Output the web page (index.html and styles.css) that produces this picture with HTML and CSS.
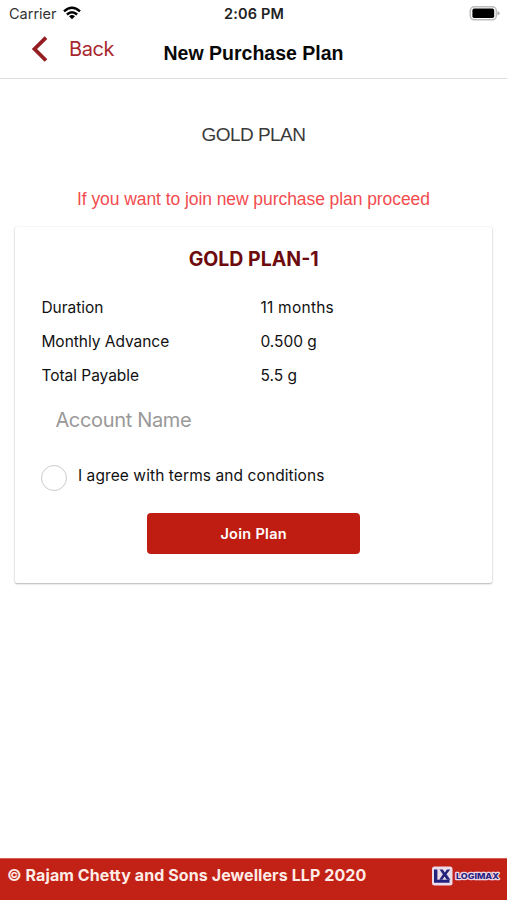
FILE: index.html
```html
<!DOCTYPE html>
<html lang="en">
<head>
<meta charset="utf-8">
<title>New Purchase Plan</title>
<link rel="stylesheet" href="styles.css">
</head>
<body>
<div class="app">
  <div class="status">
    <div class="carrier"><span>Carrier</span>
      <svg class="wifi" width="18" height="14" viewBox="0 0 18 14"><g fill="none" stroke="#000" stroke-width="2.5"><path d="M1 5.4Q9-1.8 17 5.4"/><path d="M3.9 8.5Q9 3.9 14.1 8.5"/></g><path d="M6 10.2Q9 7.7 12 10.2L9 13.3Z"/></svg>
    </div>
    <span class="time">2:06 PM</span>
    <svg class="battery" width="31" height="15" viewBox="0 0 31 15"><rect x="1.3" y=".8" width="26" height="13" rx="4" fill="#fff" stroke="#bcbcbc" stroke-width="1.5"/><rect x="3.4" y="2.6" width="21.8" height="9.4" rx="1.8"/><path d="M28.5 5Q30.7 6 30.7 7.3T28.5 9.6Z" fill="#aaa"/></svg>
  </div>
  <header class="nav">
    <a class="back"><svg width="17" height="27" viewBox="0 0 17 27"><path d="M15 1.7L3.5 13 15 24.5" fill="none" stroke="#941e22" stroke-width="3.8"/></svg><span>Back</span></a>
    <h1>New Purchase Plan</h1>
  </header>
  <main>
    <h2>GOLD PLAN</h2>
    <p class="notice">If you want to join new purchase plan proceed</p>
    <section class="card">
      <h3>GOLD PLAN-1</h3>
      <dl>
        <dt>Duration</dt><dd class="months">11 months</dd>
        <dt>Monthly Advance</dt><dd>0.500 g</dd>
        <dt>Total Payable</dt><dd>5.5 g</dd>
      </dl>
      <input class="account" placeholder="Account Name" aria-label="Account Name">
      <label class="terms"><span class="circle"></span><span class="agree">I agree with terms and conditions</span></label>
      <button>Join Plan</button>
    </section>
  </main>
  <footer>
    <span class="copyright">© Rajam Chetty and Sons Jewellers LLP 2020</span>
    <svg class="logo" width="70" height="22" viewBox="0 0 70 22"><rect x="1" y="1.5" width="20.5" height="19" rx="2.5" fill="#eadce8"/><path d="M3 4.5H6.4V14.8H18.5V17.8H3Z" fill="#23237d"/><path d="M8.5 4.5H11.8L13.8 7.5 16 4.5H19.2L15.5 9.3 19.4 14.8H15.8L13.5 11.5 11.3 14.8H8.2L11.9 9.3Z" fill="#23237d"/><text x="25" y="14.3" textLength="43" lengthAdjust="spacingAndGlyphs" font-family="Inter, sans-serif" font-size="7.8" font-weight="800" fill="#282381" stroke="#eed7e3" stroke-width="2.4" stroke-linejoin="round" paint-order="stroke">LOGIMAX</text></svg>
  </footer>
</div>
</body>
</html>
```
FILE: styles.css
```css
* { box-sizing: border-box; }
body { margin: 0; background: #fff; color: #111; font-family: Inter, sans-serif; }
.app { height: 900px; display: flex; flex-direction: column; }
.status { height: 28px; display: grid; grid-template-columns: 1fr auto 1fr; align-items: center; padding: 0 7px 0 9px; font-size: 14.5px; line-height: 18px; }
.carrier { display: flex; align-items: center; gap: 6px; color: #333; }
.carrier span, .time { padding-bottom: 0; }
.wifi { margin-bottom: 2px; }
.time { font-weight: 600; color: #222; margin-right: 1px; letter-spacing: .15px; }
.battery { justify-self: end; margin-bottom: 2px; }
.nav { height: 51px; border-bottom: 1px solid #dedede; display: grid; grid-template-columns: 1fr auto 1fr; padding: 0 31px; }
.back { height: 42px; display: flex; align-items: center; gap: 21px; color: #a9272e; font-size: 20px; letter-spacing: -.4px; }
h1 { margin: 0; font: bold 19.5px/51px "Liberation Sans", sans-serif; color: #080808; white-space: nowrap; }
main { flex: 1; padding: 0 15px; }
h2 { margin: 43px 0 0; text-align: center; font: 19px/26px "Liberation Sans", sans-serif; letter-spacing: -.55px; color: #3a3a3a; }
.notice { margin: 38px 0 0; text-align: center; font: 17.5px/26px "Liberation Sans", sans-serif; letter-spacing: -.07px; color: #f34c4e; }
.card { height: 355.5px; margin: 15px 0 0 .4px; padding: 18px 26px 0; border-radius: 2px; box-shadow: 0 1px 2px rgba(0,0,0,.28), 0 0 2px rgba(0,0,0,.1); display: flex; flex-direction: column; }
h3 { margin: 0; text-align: center; font-size: 19.5px; line-height: 28px; color: #6d0a0e; font-weight: 700; }
dl { margin: 17px 0 0; display: grid; grid-template-columns: 219px 1fr; grid-auto-rows: 34.2px; line-height: 35px; font-size: 15.5px; }
dt { letter-spacing: -.03px; }
dd { margin: 0; }
.months { letter-spacing: .25px; }
.account { border: 0; outline: 0; padding: 0 14px; height: 40px; margin-top: 7px; font: 20px Inter, sans-serif; letter-spacing: -.33px; background: transparent; }
.account::placeholder { color: #999; opacity: 1; }
.terms { display: flex; gap: 10.5px; margin-top: 25px; height: 26px; }
.circle { width: 26px; height: 26px; border: 1.5px solid #ccc; border-radius: 50%; }
.agree { font-size: 15.5px; line-height: 22px; letter-spacing: .09px; }
button { width: 213px; height: 41px; margin: 22px auto 0; border: 0; border-radius: 4px; background: #c01d12; color: #fff; font: 600 14.5px Inter, sans-serif; letter-spacing: .3px; }
footer { height: 42px; background: #c22116; border-top: 1px solid #d55c50; color: #ffebe5; display: flex; justify-content: space-between; padding: 5px 6px 0 7px; }
.copyright { font-size: 16px; line-height: 22px; font-weight: 700; letter-spacing: .09px; white-space: nowrap; }
.logo { margin-top: 1px; }
```
